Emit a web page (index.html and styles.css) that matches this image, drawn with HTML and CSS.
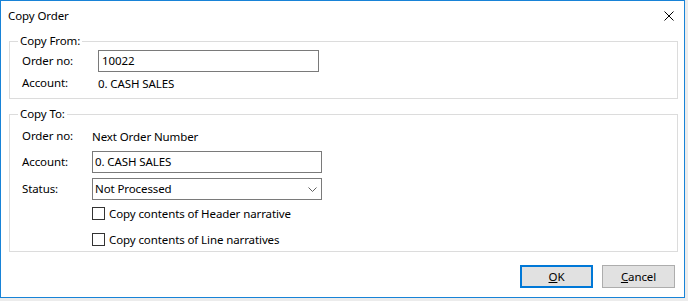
FILE: index.html
```html
<!DOCTYPE html>
<html>
	<head>
		<meta charset="UTF-8">
		<title>Copy Order</title>
		<link rel="stylesheet" href="styles.css">
	</head>
	<body>
		<div class="window">
			<div class="titlebar">
				<span class="title">Copy Order</span>
				<svg class="close" width="10" height="10" viewBox="0 0 10 10">
					<path d="M0.5 0.5 L9.5 9.5 M9.5 0.5 L0.5 9.5" stroke="#000" stroke-width="1" fill="none"/>
				</svg>
			</div>

			<fieldset class="group group-from">
				<legend>Copy From:</legend>
				<div class="row row-input">
					<span class="label">Order no:</span>
					<div class="field">10022</div>
				</div>
				<div class="row row-text">
					<span class="label">Account:</span>
					<span class="value">0. CASH SALES</span>
				</div>
			</fieldset>

			<fieldset class="group group-to">
				<legend>Copy To:</legend>
				<div class="row row-text">
					<span class="label">Order no:</span>
					<span class="value">Next Order Number</span>
				</div>
				<div class="row row-input row-account">
					<span class="label">Account:</span>
					<div class="field">0. CASH SALES</div>
				</div>
				<div class="row row-input row-status">
					<span class="label">Status:</span>
					<div class="field select">
						<span>Not Processed</span>
						<svg class="chevron" width="9" height="5" viewBox="0 0 9 5">
							<path d="M0.5 0.5 L4.5 4.5 L8.5 0.5" stroke="#606060" stroke-width="1" fill="none"/>
						</svg>
					</div>
				</div>
				<div class="row check check-first">
					<span class="label"></span>
					<label><span class="box"></span>Copy contents of Header narrative</label>
				</div>
				<div class="row check check-second">
					<span class="label"></span>
					<label><span class="box"></span>Copy contents of Line narratives</label>
				</div>
			</fieldset>

			<div class="buttons">
				<button class="btn btn-default"><u>O</u>K</button>
				<button class="btn"><u>C</u>ancel</button>
			</div>
		</div>
	</body>
</html>
```

FILE: styles.css
```css
body{
	margin: 0;
	background: #ececec;
	font-family: "Segoe UI", "Noto Sans", "Liberation Sans", sans-serif;
	font-size: 11.5px;
	letter-spacing: -0.1px;
	color: #000;
}
.window{
	width: 685px;
	height: 298px;
	box-sizing: border-box;
	background: #fff;
	border: 1px solid #1883d7;
}
.titlebar{
	height: 30px;
	display: flex;
	align-items: center;
	justify-content: space-between;
	padding: 0 10px 0 7px;
}
.title{
	line-height: 16px;
}
.group{
	margin: 2px 6px 0 8px;
	padding: 1px 8px 7px 12px;
	border: 1px solid #dcdcdc;
	min-width: 0;
}
.group legend{
	padding: 0 2px;
	margin-left: -4px;
	line-height: 16px;
	height: 16px;
}
.group-to{
	margin-top: 7px;
	padding-top: 6px;
	padding-bottom: 3px;
}
.row{
	display: flex;
	align-items: center;
}
.label{
	flex: 0 0 76px;
	line-height: 16px;
}
.group-to .label{
	flex-basis: 70px;
}
.row-text{
	height: 16px;
	margin-top: 3px;
}
.group-to .row-text{
	margin-top: 0;
}
.row-input{
	height: 22px;
}
.field{
	width: 221px;
	height: 22px;
	box-sizing: border-box;
	border: 1px solid #7a7a7a;
	padding: 0 3px;
	line-height: 20px;
}
.group-to .field{
	width: 230px;
	padding-left: 2px;
}
.row-account{
	margin-top: 7px;
}
.row-status{
	margin-top: 5px;
}
.select{
	display: flex;
	align-items: center;
	justify-content: space-between;
	padding-right: 4px;
}
.check{
	height: 16px;
}
.check label{
	display: flex;
	align-items: center;
	line-height: 16px;
}
.box{
	width: 13px;
	height: 13px;
	box-sizing: border-box;
	border: 1px solid #333;
	background: #fff;
	margin-right: 4px;
	margin-top: -2px;
}
.check-first{
	margin-top: 6px;
}
.check-second{
	margin-top: 10px;
}
.buttons{
	display: flex;
	justify-content: flex-end;
	gap: 9px;
	padding-right: 9px;
	margin-top: 13px;
}
.btn{
	width: 73px;
	height: 23px;
	box-sizing: border-box;
	background: #e1e1e1;
	border: 1px solid #adadad;
	font: inherit;
	letter-spacing: inherit;
	color: #000;
	padding: 0;
	line-height: 20px;
}
.btn-default{
	border: 2px solid #0078d7;
}
```
